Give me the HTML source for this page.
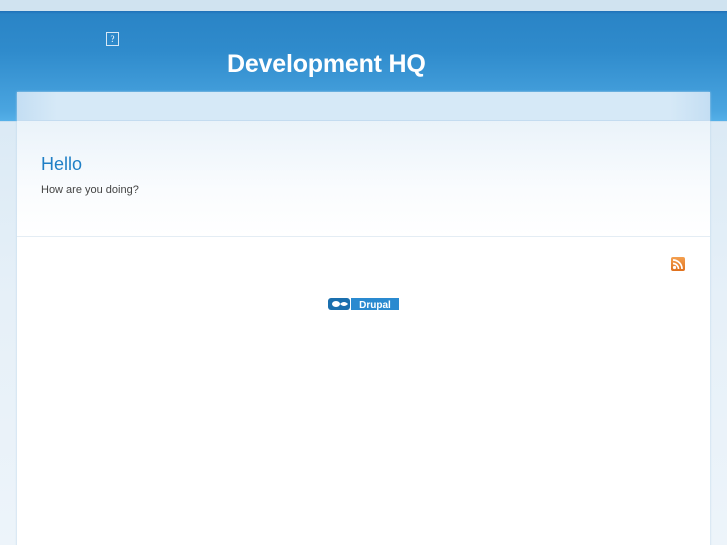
<!DOCTYPE html>
<html><head><style>
html,body{margin:0;padding:0;width:727px;height:545px;overflow:hidden;font-family:"Liberation Sans",sans-serif}
body{background:linear-gradient(#d4e6f3 0,#e6f0f8 300px,#edf4fa 545px);position:relative}
#top{position:absolute;left:0;top:0;width:727px;height:11px;background:#d0e3f0}
#hdr{position:absolute;left:0;top:11px;width:727px;height:110px;background:linear-gradient(#1f70b8 0,#2a84c6 3px,#2f8bcc 40px,#4aa5e0 100px,#55b0e8 110px);border-bottom:1px solid #c8dff0}
#logo{position:absolute;left:106px;top:21px;width:11px;height:12px;border:1px solid #d8e8f5;color:#fff;font-size:9px;line-height:12px;text-align:center;font-family:"Liberation Serif",serif}
#title{position:absolute;left:227px;top:39px;color:#fff;font-size:25px;font-weight:bold;letter-spacing:-0.2px}
#box{position:absolute;left:17px;top:92px;width:693px;height:460px;background:#fff;box-shadow:0 0 2px #b8d4ea}
#boxtop{position:absolute;left:0;top:0;width:693px;height:28px;background:linear-gradient(90deg,#c4def3,#d6e9f7 40px,#d6e9f7 653px,#c4def3);border-bottom:1px solid #c4dcf0}
#content{position:absolute;left:0;top:29px;width:693px;height:115px;background:linear-gradient(#eaf3fa,#fafcfe 70px,#fff);border-bottom:1px solid #e4edf4}
h2{position:absolute;left:24px;top:62px;margin:0;font-weight:normal;color:#1f7fc6;font-size:18px}
p{position:absolute;left:24px;top:92px;margin:0;font-size:11px;color:#444}
#rss{position:absolute;left:654px;top:165px;width:14px;height:14px;border-radius:2px;background:linear-gradient(#f4a050,#e0701c)}
#dru{position:absolute;left:311px;top:205px;width:71px;height:12px}
</style></head><body>
<div id="top"></div>
<div id="hdr"><div id="logo">?</div><div id="title">Development HQ</div></div>
<div id="box"><div id="boxtop"></div><div id="content"></div>
<h2>Hello</h2><p>How are you doing?</p>
<div id="rss"><svg width="14" height="14"><circle cx="3.5" cy="10.5" r="1.6" fill="#fff"/><path d="M2 6.5a5.5 5.5 0 0 1 5.5 5.5M2 3a9 9 0 0 1 9 9" stroke="#fff" stroke-width="1.7" fill="none"/></svg></div>
<div id="dru"><svg width="71" height="12"><rect x="0" y="0" width="22" height="12" rx="3" fill="#1a6fae"/><ellipse cx="8" cy="6" rx="4" ry="3" fill="#fff"/><path d="M12 6q4-4 8 0q-4 4-8 0" fill="#fff"/><rect x="23" y="0" width="48" height="12" fill="#2a8ad0"/><text x="47" y="10" fill="#fff" font-size="10" font-weight="bold" text-anchor="middle" font-family="Liberation Sans,sans-serif">Drupal</text></svg></div>
</div>
</body></html>
